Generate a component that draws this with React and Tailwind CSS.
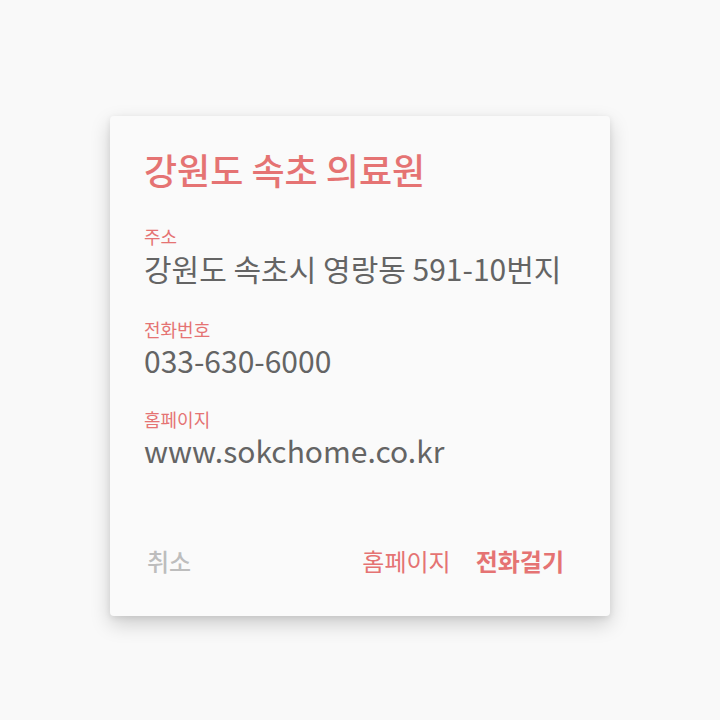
export default function App() {
  const font = { fontFamily: '"Noto Sans CJK KR", "Noto Sans", sans-serif' };
  return (
    <div className="min-h-[720px] w-[720px] bg-[#f9f9f9] pt-[116px] flex justify-center" style={font}>
      <div className="w-[500px] h-[500px] bg-[#fafafa] rounded-[4px] shadow-[0_8px_20px_rgba(0,0,0,0.18),0_2px_6px_rgba(0,0,0,0.08)] flex flex-col px-[34px] pt-[31px] pb-[40px]">
        <div className="text-[36px] leading-[44px] font-medium text-[#e57373]">강원도 속초 의료원</div>
        <div className="mt-[34px] flex flex-col">
          <div className="text-[18px] leading-[22px] text-[#e57373]">주소</div>
          <div className="mt-[2px] text-[30px] leading-[38px] text-[#646464] font-normal">강원도 속초시 영랑동 591-10번지</div>
        </div>
        <div className="mt-[31px] flex flex-col">
          <div className="text-[18px] leading-[22px] text-[#e57373]">전화번호</div>
          <div className="mt-[1px] text-[30px] leading-[38px] text-[#646464] font-normal">033-630-6000</div>
        </div>
        <div className="mt-[29px] flex flex-col">
          <div className="text-[18px] leading-[22px] text-[#e57373]">홈페이지</div>
          <div className="mt-[1px] text-[30px] leading-[38px] text-[#646464] font-normal">www.sokchome.co.kr</div>
        </div>
        <div className="mt-auto flex items-center text-[24px] leading-[30px]">
          <div className="text-[#bdbdbd] ml-[3px] font-medium">취소</div>
          <div className="ml-auto text-[#e57373] font-normal">홈페이지</div>
          <div className="ml-[25px] mr-[12px] text-[#e57373] font-bold">전화걸기</div>
        </div>
      </div>
    </div>
  );
}
